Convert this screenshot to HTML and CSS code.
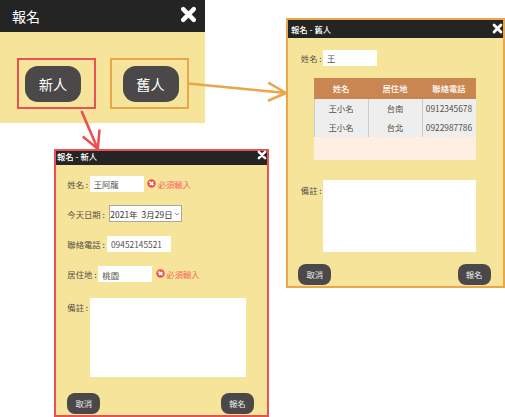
FILE: index.html
```html
<!DOCTYPE html>
<html lang="zh-Hant">
<head>
<meta charset="utf-8">
<title>報名</title>
<link rel="stylesheet" href="styles.css">
</head>
<body>
<svg class="defs" width="0" height="0">
  <symbol id="close" viewBox="0 0 16 16"><path d="M3 3 13 13M13 3 3 13" fill="none" stroke="currentColor" stroke-width="4.2" stroke-linecap="round"/></symbol>
  <symbol id="error" viewBox="0 0 9 9"><circle cx="4.5" cy="4.5" r="4.2" fill="#f14a50"/><path d="M2.3 2.6 6.3 6.1M6.3 3 3 5.9" stroke="#fff" stroke-width="1.8"/></symbol>
</svg>
<main class="canvas">
  <section class="window start">
    <header class="bar"><h1>報名</h1><svg class="close"><use href="#close"/></svg></header>
    <div class="choices">
      <div class="mark mark-new"><button class="btn btn-large">新人</button></div>
      <div class="mark mark-old"><button class="btn btn-large">舊人</button></div>
    </div>
  </section>

  <section class="window new">
    <header class="bar"><h2>報名 - 新人</h2><svg class="close"><use href="#close"/></svg></header>
    <div class="body">
      <div class="row"><label>姓名 :</label><span class="field name">王阿龍</span><span class="error"><svg><use href="#error"/></svg>必須輸入</span></div>
      <div class="row"><label class="l-date">今天日期 :</label><span class="field date">2021年&nbsp; 3月29日<svg viewBox="0 0 6 4"><path d="M1 1 3 3 5 1" fill="none" stroke="#777" stroke-width=".8"/></svg></span></div>
      <div class="row"><label class="l-phone">聯絡電話 :</label><span class="field phone">09452145521</span></div>
      <div class="row"><label class="l-place">居住地 :</label><span class="field place">桃園</span><span class="error"><svg><use href="#error"/></svg>必須輸入</span></div>
      <div class="row memo"><label>備註 :</label><span class="area"></span></div>
      <footer class="actions"><button class="btn">取消</button><button class="btn">報名</button></footer>
    </div>
  </section>

  <section class="window old">
    <header class="bar"><h2>報名 - 舊人</h2><svg class="close"><use href="#close"/></svg></header>
    <div class="body">
      <div class="row"><label>姓名 :</label><span class="field name">王</span></div>
      <div class="list">
        <table>
          <thead><tr><th>姓名</th><th>居住地</th><th>聯絡電話</th></tr></thead>
          <tbody>
            <tr><td>王小名</td><td>台南</td><td>0912345678</td></tr>
            <tr><td>王小名</td><td>台北</td><td>0922987786</td></tr>
          </tbody>
        </table>
      </div>
      <div class="row memo"><label>備註 :</label><span class="area"></span></div>
      <footer class="actions"><button class="btn">取消</button><button class="btn">報名</button></footer>
    </div>
  </section>

  <svg class="arrows" viewBox="0 0 505 417" fill="none">
    <path d="M81.5 111 97.8 149M82.8 136.5 97.8 149 99.5 129.5" stroke="#e95253" stroke-width="2.6"/>
    <path d="M188 83.5 286 93M268.3 82.7 286 93 268 100.7" stroke="#eaa648" stroke-width="2.6"/>
  </svg>
</main>
</body>
</html>
```

FILE: styles.css
```css
* { box-sizing: border-box; }

body {
  margin: 0;
  background: #fff;
  color: #55524a;
  font: 8.35px/12px "Noto Sans CJK TC", "Noto Sans", sans-serif;
}

.defs { position: absolute; }

.canvas {
  position: relative;
  width: 505px;
  height: 417px;
  overflow: hidden;
}

.window {
  position: absolute;
  background: #f7e49b;
}

.bar {
  display: flex;
  justify-content: space-between;
  align-items: center;
  background: #242424;
  color: #fff;
}

h1, h2 { margin: 0; font-weight: 400; }
h1 { font-size: 14px; line-height: 20px; }
h2 { font-size: 8.35px; line-height: 12px; font-weight: 500; }

.btn {
  width: 33px;
  height: 21px;
  padding: 0;
  border: 0;
  border-radius: 8px;
  background: #4a4848;
  color: #eee;
  font: inherit;
}

.btn-large {
  width: 56px;
  height: 36px;
  border-radius: 13px;
  color: #fff;
  font-size: 14.2px;
}

/* Start window */
.start { left: 0; top: 0; width: 205px; height: 123px; }
.start .bar { height: 32px; padding: 0 8px 3px 12px; }
.start .bar h1 { padding-top: 2px; }
.start .close { width: 17px; height: 17px; }
.choices { display: flex; gap: 14px; padding: 26px 0 0 17px; }
.mark { width: 79px; height: 51px; padding: 6px 0 0 6px; border: 2px solid #e95253; }
.mark-old { border-color: #eaa648; padding-left: 10.5px; }

/* Rows shared by both forms */
.row { display: flex; align-items: center; height: 17px; }
.row label { width: 22.4px; white-space: nowrap; }

.field {
  display: flex;
  align-items: center;
  width: 54px;
  height: 16px;
  padding: 1px 0 0 4px;
  background: #fff;
  white-space: nowrap;
}

.error { display: flex; align-items: center; gap: 1.5px; margin-left: 3.5px; color: #f5685c; }
.error svg { width: 9px; height: 9px; margin-top: -1px; }
.memo { align-items: flex-start; }
.memo label { padding-top: 4px; }
.area { background: #fff; }
.actions { display: flex; justify-content: space-between; }

/* New member window */
.new { left: 54px; top: 149px; width: 215px; height: 268px; border: 2px solid #e95253; }
.new .bar { height: 13.5px; padding: 0 0 3px 1px; }
.new .close { width: 10px; height: 10px; margin-top: -3px; }
.new .body { padding: 10.5px 13px 0 11.3px; }
.new .row { margin-bottom: 13.2px; }
.new .l-date { width: 42px; }
.new .l-phone { width: 39.7px; }
.new .l-place { width: 31px; }
.new .date { width: 73px; height: 17px; padding-left: 0; border: 1px solid #a9a9a0; color: #333; letter-spacing: .1px; }
.date svg { width: 6px; height: 4px; margin-left: 1px; }
.new .phone { width: 64px; }
.new .memo { height: 79px; margin: 15px 0 16px; }
.new .memo label { padding-top: 3px; }
.new .area { width: 156px; height: 79px; }
.new .actions { width: 186.5px; }

/* Existing member window */
.old { left: 286px; top: 18px; width: 219px; height: 270px; border: 2px solid #eaa648; }
.old .bar { height: 18px; padding: 0 .5px 1px 3px; }
.old .close { width: 11px; height: 11px; margin-top: -1px; }
.old .body { padding: 12px 12.5px 0 10.3px; }
.old .row { padding-left: 2.5px; height: 16px; }
.old .field { padding-top: 0; }
.old label { width: 22.2px; }
.list { width: 162px; height: 82px; margin: 12px 0 20px 15.7px; background: #ffeee2; }
table { width: 162px; border-spacing: 0; table-layout: fixed; text-align: center; }
th, td { padding: 0; }
th { height: 20.5px; background: #c98651; color: #fff; font-weight: 500; }
td { height: 19px; padding-right: 1px; border-left: 1px solid #ccc; background: #eee; }
.old .memo { height: 72px; margin-bottom: 11.5px; }
.old .area { width: 153px; height: 72px; }

.arrows {
  position: absolute;
  left: 0;
  top: 0;
  width: 505px;
  height: 417px;
  pointer-events: none;
}
```
